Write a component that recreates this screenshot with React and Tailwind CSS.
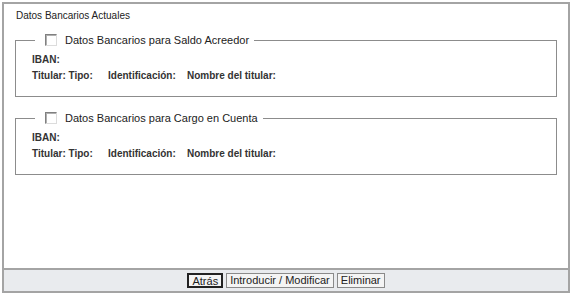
import React from "react"

const font = { fontFamily: "'Liberation Sans', Arial, sans-serif" }

const CheckBox = () => (
  <span className="inline-block w-[12px] h-[12px] border border-t-[#808080] border-l-[#808080] border-r-[#dcdcdc] border-b-[#dcdcdc] bg-white shadow-[inset_1px_1px_0_#b0b0b0]" />
)

const BankBlock = ({ title, className }) => (
  <fieldset className={`border border-[#8c8c8c] mx-[11px] px-[16px] pt-[5px] pb-[12px] ${className}`}>
    <legend className="ml-[3px] pl-[10px] pr-[5px] flex items-center gap-[8px] text-[11px] leading-[14px] text-[#222]">
      <CheckBox />
      <span>{title}</span>
    </legend>
    <div className="text-[10px] leading-[16px] font-bold text-[#333]">
      <div>IBAN:</div>
      <div className="flex">
        <span className="w-[76px]">Titular: Tipo:</span>
        <span className="w-[79px]">Identificación:</span>
        <span>Nombre del titular:</span>
      </div>
    </div>
  </fieldset>
)

const Btn = ({ children, active }) => (
  <button
    className={`h-[15px] px-[3px] text-[11px] leading-[13px] text-[#222] bg-[#f4f4f4] ${
      active ? "border-2 border-[#222]" : "border border-[#8a8a8a]"
    }`}
  >
    {children}
  </button>
)

export default function App() {
  return (
    <div className="w-[573px] h-[296px] bg-white pt-[2px] pl-[2px]" style={font}>
      <div className="w-[568px] h-[291px] border-2 border-[#a4a4a4] flex flex-col">
        <div className="flex-1">
          <div className="pl-[12px] pt-[6px] text-[10px] leading-[12px] text-[#222]">Datos Bancarios Actuales</div>
          <BankBlock title="Datos Bancarios para Saldo Acreedor" className="mt-[11px]" />
          <BankBlock title="Datos Bancarios para Cargo en Cuenta" className="mt-[14px]" />
        </div>
        <div className="h-[23px] border-t-2 border-[#a4a4a4] bg-[#e9ebee] flex items-center justify-center gap-[3px]">
          <Btn active>Atrás</Btn>
          <Btn>Introducir / Modificar</Btn>
          <Btn>Eliminar</Btn>
        </div>
      </div>
    </div>
  )
}
